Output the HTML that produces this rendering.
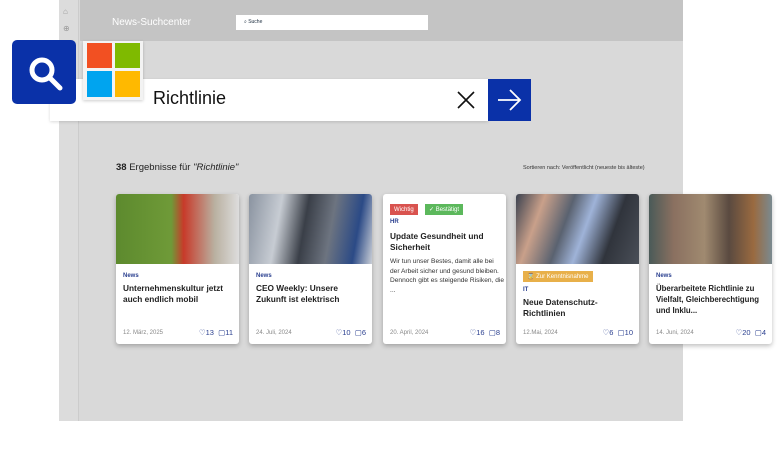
<!DOCTYPE html><html><head><style>
*{margin:0;padding:0;box-sizing:border-box}
body{width:780px;height:476px;background:#fff;position:relative;overflow:hidden;font-family:"Liberation Sans",sans-serif}
.a{position:absolute}
.card{position:absolute;top:194px;width:123px;height:150px;background:#fff;border-radius:3px;box-shadow:0 2px 5px rgba(0,0,0,.25);overflow:hidden}
.img{height:70px}
.cat{font-size:6px;font-weight:bold;color:#2a3f8f;position:absolute;left:7px}
.t{font-size:8.3px;font-weight:bold;color:#222;position:absolute;left:7px;width:104px;line-height:11px}
.d{font-size:6px;color:#888;position:absolute;left:7px;bottom:8px}
.m{font-size:7.5px;color:#2a3f8f;position:absolute;right:6px;bottom:7px;white-space:nowrap}
.tag{position:absolute;top:10px;height:11px;display:flex;align-items:center;font-size:6px;line-height:6px;color:#fff;padding:0 4px;white-space:nowrap}
</style></head><body>
<div class="a" style="left:59px;top:0;width:624px;height:421px;background:#d9d9d9"></div>
<div class="a" style="left:59px;top:0;width:20px;height:421px;background:#dcdcdc;border-right:1px solid #ccc"></div>
<div class="a" style="left:63px;top:7px;font-size:8px;color:#999">⌂</div>
<div class="a" style="left:63px;top:24px;font-size:8px;color:#999">⊕</div>
<div class="a" style="left:80px;top:0;width:603px;height:41px;background:#c4c4c4"></div>
<div class="a" style="left:112px;top:17px;font-size:10px;color:#fff">News-Suchcenter</div>
<div class="a" style="left:236px;top:15px;width:192px;height:15px;background:#fff;font-size:5px;color:#234;padding:4px 0 0 8px">⌕ Suche</div>
<div class="a" style="left:50px;top:79px;width:438px;height:42px;background:#fff;box-shadow:0 1px 3px rgba(0,0,0,.15)"></div>
<div class="a" style="left:153px;top:88px;font-size:18px;color:#111">Richtlinie</div>
<svg class="a" style="left:456px;top:90px" width="20" height="20"><path d="M2 2L18 18M18 2L2 18" stroke="#111" stroke-width="1.6"/></svg>
<div class="a" style="left:488px;top:79px;width:43px;height:42px;background:#0a31a8"></div>
<svg class="a" style="left:496px;top:88px" width="26" height="24"><path d="M2 12H24M14 2L24 12L14 22" stroke="#fff" stroke-width="1.8" fill="none"/></svg>
<div class="a" style="left:12px;top:40px;width:64px;height:64px;background:#0a31a8;border-radius:5px"></div>
<svg class="a" style="left:12px;top:40px" width="64" height="64"><circle cx="30" cy="30" r="10" stroke="#fff" stroke-width="5" fill="none"/><path d="M38 38L48 48" stroke="#fff" stroke-width="5" stroke-linecap="round"/></svg>
<div class="a" style="left:83px;top:41px;width:60px;height:59px;background:#f3f3f3;box-shadow:0 1px 3px rgba(0,0,0,.2)"></div>
<div class="a" style="left:87px;top:43px;width:25px;height:25px;background:#f25022"></div>
<div class="a" style="left:115px;top:43px;width:25px;height:25px;background:#7fba00"></div>
<div class="a" style="left:87px;top:71px;width:25px;height:26px;background:#00a4ef"></div>
<div class="a" style="left:115px;top:71px;width:25px;height:26px;background:#ffb900"></div>
<div class="a" style="left:116px;top:162px;font-size:9.5px;color:#222"><b>38</b> Ergebnisse für <i>"Richtlinie"</i></div>
<div class="a" style="left:523px;top:165px;font-size:5.5px;color:#333">Sortieren nach: Veröffentlicht (neueste bis älteste)</div>

<div class="card" style="left:116px"><div class="img" style="background:linear-gradient(90deg,#5d8a2e 0,#6f9a38 45%,#c83a2a 55%,#b9b0a0 80%,#ddd 100%)"></div>
<div class="cat" style="top:79px">News</div><div class="t" style="top:89px">Unternehmenskultur jetzt auch endlich mobil</div>
<div class="d">12. März, 2025</div><div class="m">♡13 &nbsp;▢11</div></div>

<div class="card" style="left:249px"><div class="img" style="background:linear-gradient(100deg,#8a93a0 0,#c7ccd3 25%,#3a3f48 45%,#6d7480 65%,#2b4a86 85%,#c9ced6 100%)"></div>
<div class="cat" style="top:79px">News</div><div class="t" style="top:89px">CEO Weekly: Unsere Zukunft ist elektrisch</div>
<div class="d">24. Juli, 2024</div><div class="m">♡10 &nbsp;▢6</div></div>

<div class="card" style="left:383px"><span class="tag" style="left:7px;background:#d9534f">Wichtig</span><span class="tag" style="left:42px;background:#5cb85c">✓ Bestätigt</span>
<div class="cat" style="top:25px">HR</div><div class="t" style="top:37px;width:108px">Update Gesundheit und Sicherheit</div>
<div class="a" style="left:7px;top:63px;width:114px;font-size:6.6px;line-height:9.7px;color:#333">Wir tun unser Bestes, damit alle bei der Arbeit sicher und gesund bleiben. Dennoch gibt es steigende Risiken, die ...</div>
<div class="d">20. April, 2024</div><div class="m">♡16 &nbsp;▢8</div></div>

<div class="card" style="left:516px"><div class="img" style="background:linear-gradient(110deg,#3b4250 0,#c9a08a 20%,#5a6270 40%,#9fb3d8 55%,#30343c 75%,#4a4f58 100%)"></div>
<span class="tag" style="left:7px;top:77px;background:#e8b04a">⌛ Zur Kenntnisnahme</span>
<div class="cat" style="top:93px">IT</div><div class="t" style="top:103px">Neue Datenschutz-Richtlinien</div>
<div class="d">12.Mai, 2024</div><div class="m">♡6 &nbsp;▢10</div></div>

<div class="card" style="left:649px"><div class="img" style="background:linear-gradient(90deg,#4a5a58 0,#8a7060 20%,#a08a70 45%,#5a4a40 65%,#9a6a40 85%,#7a8a90 100%)"></div>
<div class="cat" style="top:79px">News</div><div class="t" style="top:89px;width:116px;font-size:7.8px">Überarbeitete Richtlinie zu Vielfalt, Gleichberechtigung und Inklu...</div>
<div class="d">14. Juni, 2024</div><div class="m">♡20 &nbsp;▢4</div></div>
</body></html>
